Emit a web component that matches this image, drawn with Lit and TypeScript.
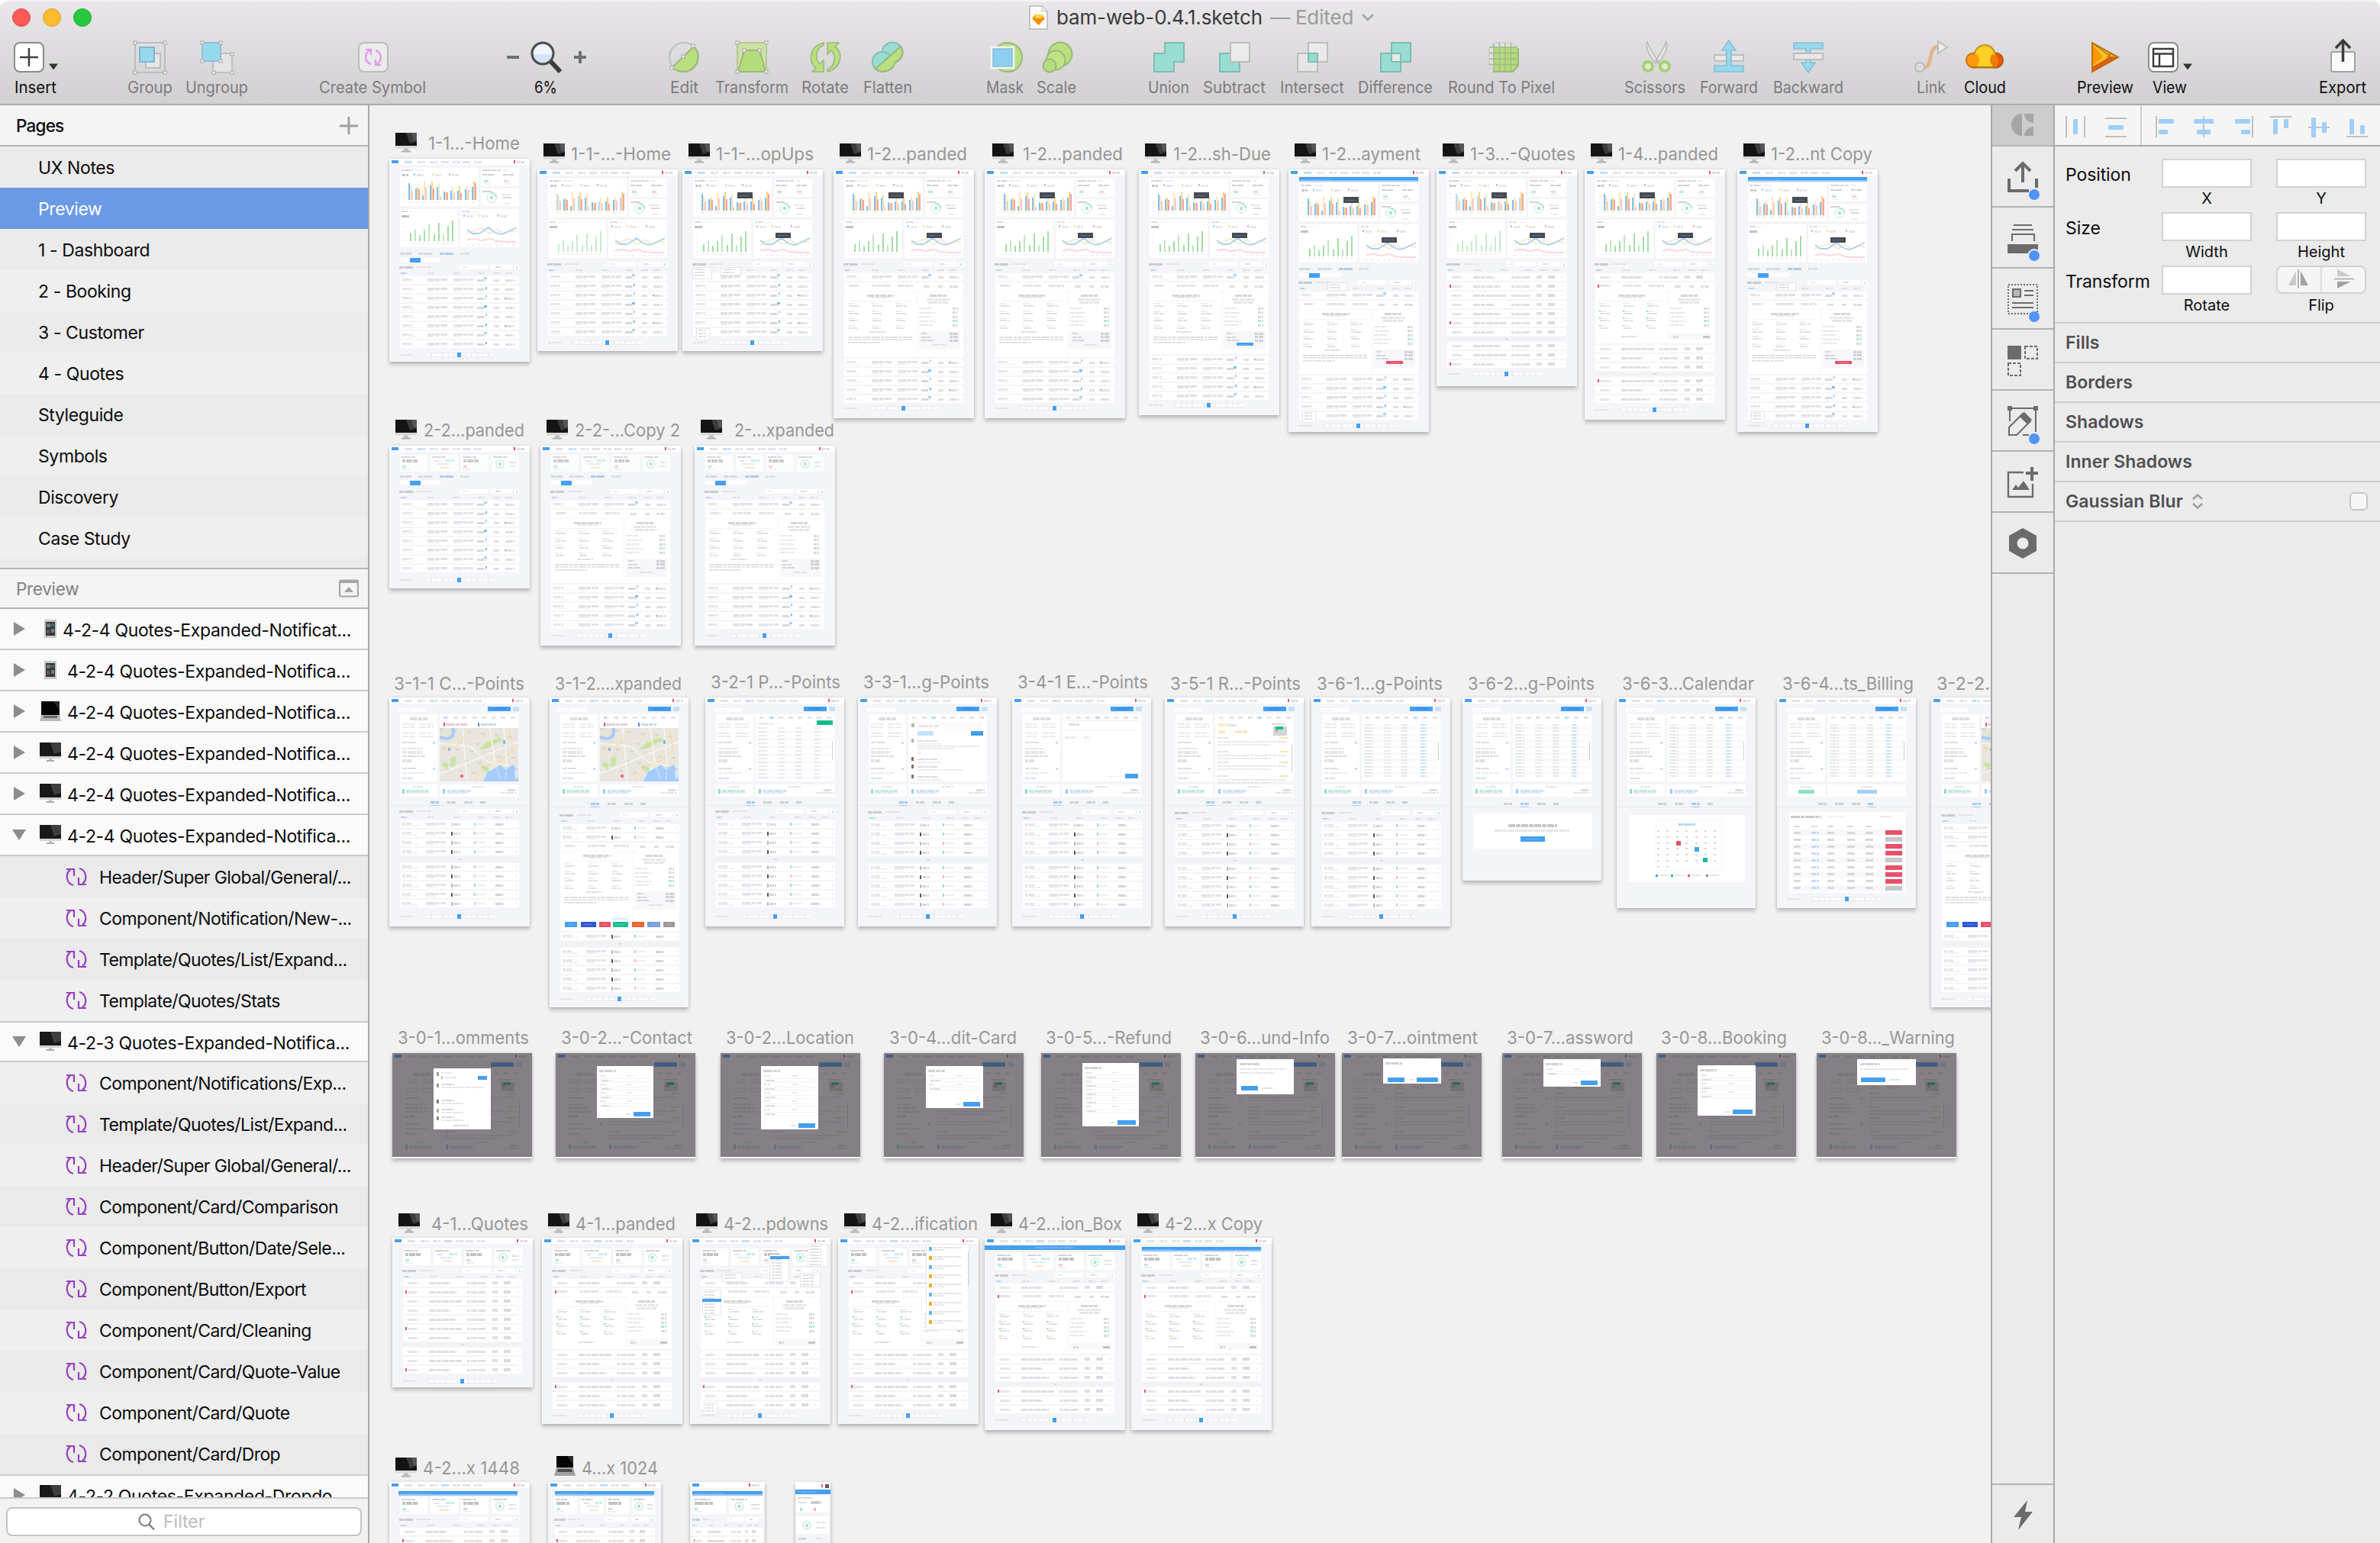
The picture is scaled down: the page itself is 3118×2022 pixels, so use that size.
import { LitElement, html, svg, css, nothing } from "lit";
import { customElement } from "lit/decorators.js";

const BLUE = "#459ff0";
const RED = "#e9506a";
const GREEN = "#18c191";

/* ---------- small drawing helpers ---------- */

const box = (x: number, y: number, w: number, h: number, fill: string) =>
  svg`<rect x=${x} y=${y} width=${w} height=${h} fill=${fill}></rect>`;

const dashes = ["9 1 6 1", "6 1 11 1 4 1", "12 1 5 1", "4 1 8 1 10 1"];

const words = (x: number, y: number, w: number, color = "#dfe1e6", h = 3) =>
  svg`<line x1=${x} y1=${y} x2=${x + w} y2=${y} stroke=${color} stroke-opacity="0.72" stroke-width=${h} stroke-dasharray=${dashes[Math.round(x * 3 + w) % 4]}></line>`;

const seq = (n: number) => Array.from({ length: n }, (_, i) => i);

/* ---------- artboard parts ---------- */

const nav = (w: number, active = 0) => svg`
  ${box(0, 0, w, 8, "#ffffff")}
  ${box(3, 2, 9, 4, BLUE)}
  ${w > 120
    ? [20, 37, 53, 68, 83, 96, 111].filter((x) => x < w - 45).map((x, i) => words(x, 4, 10, i === active ? "#b0d0f2" : "#d6d8de", 3))
    : nothing}
  ${box(w - 21, 2, 2, 4, RED)}
  ${words(w - 17, 4, 10, "#ced0d6", 3)}`;

const pager = (y: number) => svg`
  ${words(14, y + 3, 17, "#dcdde1", 2)}
  ${box(47, y, 90, 6, "#eaebee")}
  ${seq(12).map((i) => box(48 + i * 7.5, y + 1, 6, 4, "#fdfdfd"))}
  ${box(89, y, 5, 6, BLUE)}`;

const pill = (x: number, y: number, w: number, h: number, fill: string) => svg`
  ${box(x, y, w, h, fill)}${words(x + w * 0.25, y + h / 2, w * 0.5, "#ffffff55", 1)}`;

const listHead = (y: number) => svg`
  ${words(13, y, 18, "#b9bbc0", 3)}${words(36, y, 18, "#dcdde1", 2)}
  ${box(92, y - 3, 37, 6, "#ffffff")}${words(96, y, 6, "#e6e6ea", 2)}
  ${box(133, y - 3, 28, 6, "#ffffff")}${words(139, y, 8, "#d0d0d4", 2)}
  ${box(164, y - 3, 6, 6, "#ffffff")}${box(166, y - 1, 2, 3, "#c4e2fa")}
  ${words(15, y + 8, 8, "#9cc8f3", 2)}
  ${[50, 84, 116, 136, 152].map((x) => words(x, y + 8, 9, "#d4d5da", 2))}`;

type Kind = "book" | "quote" | "point";

const listRow = (y: number, i: number, kind: Kind) => svg`
  ${box(14, y, 156, 10, "#ffffff")}
  ${kind === "book"
    ? svg`
      ${words(17, y + 4, 13, "#dcdde2", 3)}${words(17, y + 7, 22, "#edeef1", 1)}
      ${words(50, y + 4, 26, "#d4d5da", 3)}${words(50, y + 7, 14, "#ebecef", 2)}
      ${words(84, y + 4, 26, "#d7d8dd", 3)}${words(84, y + 7, 12, "#eeeff2", 2)}
      ${words(115, y + 5, 11, "#c8cacf", 3)}
      ${box(126 - (i % 3 ? 0 : 2), y + 1 + (i % 2), i % 3 ? 2 : 4, 3, i % 2 ? "#7fbdf5" : "#a9d3f8")}
      ${words(137, y + 5, 7, "#d3d4d9", 3)}${words(152, y + 5, 12, "#d3d4d9", 3)}
      ${i % 3 === 2 ? box(151, y + 4, 2, 2, "#f0909f") : nothing}`
    : kind === "quote"
      ? svg`
      ${i % 4 === 1 ? box(17, y + 3, 2, 4, RED) : nothing}
      ${words(20, y + 5, 14, "#dcdde2", 3)}
      ${words(48, y + 5, 28 + (i % 3) * 8, "#d2d3d8", 3)}
      ${words(98, y + 5, 25, "#d4d5da", 3)}
      ${words(131, y + 5, 7, "#d3d4d9", 4)}${words(146, y + 5, 10, "#cccdd3", 4)}
      ${box(164, y + 4, 1, 2, "#dddddd")}`
      : svg`
      ${words(17, y + 4, 12, "#dcdde2", 3)}${words(17, y + 7, 20, "#ebecf0", 2)}
      ${words(48, y + 4, 26, "#d9dadf", 3)}${words(48, y + 7, 14, "#e9eaee", 2)}
      ${box(81, y + 3, 2, 5, i === 0 ? "#dcdce0" : i % 2 ? "#555555" : "#b8b8b8")}${words(84, y + 5, 9, "#c6c7cb", 3)}
      ${box(111, y + 3, 2, 4, ["#8fdfc6", "#a6cff8", "#f6bcc6"][i % 3])}${words(114, y + 5, 12, "#e6e7ea", 2)}
      ${words(139, y + 5, 11, "#c4c5ca", 3)}${box(166, y + 4, 1, 2, "#dddddd")}`}`;

type Detail = "plain" | "blue" | "red" | "dots" | "social";

const expanded = (y: number, h: number, kind: Detail) => {
  const dots = ["#e3e4e8", "#8fe0c6", "#8fe0c6", "#f5cd82"];
  return svg`
  ${box(14, y, 156, h, "#ffffff")}
  ${kind === "dots" ? box(17, y + 3, 2, 4, RED) : nothing}
  ${words(20, y + 4, 14, "#d8d9de", 3)}${words(50, y + 4, 25, "#d8d9de", 3)}${words(84, y + 4, 20, "#d8d9de", 3)}
  ${words(118, y + 5, 8, "#d3d4d9", 3)}${words(137, y + 5, 6, "#d3d4d9", 3)}${words(152, y + 5, 11, "#cfd0d5", 3)}
  ${box(14, y + 11, 156, 1, "#f7f7fa")}${box(109, y + 12, 1, h - 14, "#f4f4f7")}
  ${words(44, y + 17, 36, "#c5c6cb", 3)}${words(50, y + 20, 24, "#e1e2e6", 2)}
  ${words(126, y + 17, 22, "#c5c6cb", 3)}${words(122, y + 22, 30, "#dcdde1", 3)}${words(124, y + 26, 26, "#dcdde1", 3)}
  ${box(22, y + 24, 80, 1, "#f3f3f6")}
  ${seq(4).map((r) =>
    seq(3).map((c) => svg`
      ${box(19 + c * 31, y + 27 + r * 9.5, 2, 2, kind === "dots" ? dots[r] : "#ececef")}
      ${words(21 + c * 31, y + 28 + r * 9.5, 7, "#e8e9ec", 2)}
      ${words(20 + c * 31, y + 31 + r * 9.5, 14 - r, "#d3d4d9", 2)}`)
  )}
  ${seq(5).map((r) => svg`
    ${words(112, y + 34 + r * 5.5, 16 + ((r * 5) % 9), "#dfe0e4", 2)}
    ${words(156, y + 34 + r * 5.5, 7, r === 3 ? "#8fe0c6" : "#c9cacf", 3)}`)}
  ${words(48, y + (kind === "dots" ? h - 9 : 65), 21, "#d3d4d8", 2)}
  ${kind === "dots"
    ? svg`${box(112, y + h - 14, 54, 9, "#f8f8fa")}${words(116, y + h - 9, 7, "#c9cacf", 3)}${words(155, y + h - 9, 9, "#aeb0b6", 3)}`
    : svg`
      ${words(19, y + 72, 84, "#d2d3d7", 2)}${words(19, y + 75, 84, "#dadbdf", 2)}${words(19, y + 79, 42, "#d6d7db", 2)}
      ${box(112, y + 64, 54, 24, "#f7f7f9")}
      ${seq(3).map((r) => svg`${words(115, y + 67 + r * 4.5, 8 + r * 4, "#c6c7cc", 2)}${words(152, y + 67 + r * 4.5, 11, "#c0c1c6", 3)}`)}
      ${kind === "blue" || kind === "red" ? pill(128, y + 79, 22, 4, kind === "blue" ? BLUE : RED) : words(130, y + 82, 18, "#d8d9dd", 2)}`}
  ${kind === "social"
    ? svg`
      ${box(82, y + h - 18, 20, 4, "#e4f1fd")}
      ${[
        [20, 16, BLUE],
        [41, 20, "#3158da"],
        [65, 15, RED],
        [83, 20, GREEN],
        [108, 16, "#ef632c"],
        [128, 17, "#7d9de0"],
        [149, 15, "#999999"],
      ].map(([x, w, c]) => pill(x as number, y + h - 12, w as number, 7, c as string))}`
    : nothing}`;
};

/* steps: "r<n>" is n rows, "d<n>" a divider n high, "e<n>" an expanded row n high */
const list = (y0: number, steps: string, kind: Kind, detail: Detail = "plain") => {
  let y = y0;
  let n = 0;
  const out: unknown[] = [];
  for (const s of steps.split(" ")) {
    if (s[0] === "r") {
      for (const _ of seq(Number(s.slice(1)))) {
        out.push(listRow(y, n++, kind));
        y += 12;
      }
    } else {
      const h = Number(s.slice(1));
      if (s[0] === "d") out.push(svg`${box(14, y, 156, h - 2, "#f1f2f4")}${words(90, y + h / 2 - 1, 5, "#cccdd1", 2)}`);
      else {
        out.push(expanded(y, h - 2, detail));
        n++;
      }
      y += h;
    }
  }
  return out;
};

const charts = (y: number, tips: boolean, pale = false) => {
  const h1 = [22, 15, 6, 19, 17, 11, 12, 12, 14, 17];
  const h2 = [19, 17, 25, 24, 22, 10, 17, 18, 18, 25];
  const h3 = [12, 14, 16, 15, 5, 10, 9, 9, 13, 22];
  const g = [10, 15, 8, 14, 22, 9, 24, 9, 20, 27];
  return svg`
  ${box(14, y, 103, 50, "#ffffff")}${box(120, y, 50, 24, "#ffffff")}${box(120, y + 27, 50, 23, "#ffffff")}
  ${box(14, y + 54, 76, 50, "#ffffff")}${box(93, y + 54, 77, 50, "#ffffff")}
  ${words(16, y + 3, 15, "#c0c1c5", 2)}${words(34, y + 3, 11, "#e5e6e9", 2)}
  ${words(17, y + 9, 8, "#b0b2b7", 3)}
  ${[["#a4cff8", 32], ["#fbdda0", 56], ["#f6adb6", 78]].map(([c, x]) => svg`${box(x as number, y + 7, 2, 3, c as string)}${words((x as number) + 4, y + 9, 9, "#dadbdf", 3)}`)}
  ${seq(5).map((i) => words(17, y + 19 + i * 6, 3, "#e8e8ec", 1))}
  ${seq(10).map((i) => svg`
    ${box(25 + i * 9.2, y + 42 - h1[i], 2, h1[i], i % 3 === 0 && pale ? "#b3dafb" : "#7ec1f8")}
    ${box(27 + i * 9.2, y + 42 - h2[i], 2, h2[i], i % 2 ? "#fbd48a" : "#fbe7bc")}
    ${box(29 + i * 9.2, y + 42 - h3[i], 2, h3[i], i % 2 ? "#f4a3a5" : "#f8c9c9")}
    ${words(25 + i * 9.2, y + 45, 4, "#ececef", 2)}`)}
  ${words(122, y + 3, 24, "#c5c6ca", 2)}${words(149, y + 3, 6, "#e5e6e9", 2)}
  ${words(122, y + 9, 15, "#bcbec2", 2)}${words(149, y + 9, 14, "#bcbec2", 2)}
  ${words(124, y + 17, 6, "#a2e2cd", 3)}${words(150, y + 17, 6, "#f8c1ca", 3)}${words(124, y + 21, 9, "#ececef", 2)}${words(150, y + 21, 9, "#ececef", 2)}
  ${words(122, y + 31, 12, "#c0c1c5", 2)}
  <circle cx="134" cy=${y + 39} r="6" fill="none" stroke="#dff4ed" stroke-width="2"></circle>
  <path d="M134 ${y + 33}A6 6 0 0 1 140 ${y + 39}" fill="none" stroke="#a9e4d2" stroke-width="2"></path>
  <circle cx="134" cy=${y + 39} r="2.5" fill="#a9e6d3"></circle>
  ${words(147, y + 35, 12, "#d8d9dc", 2)}${words(149, y + 39, 11, "#cacbcf", 2)}${words(150, y + 47, 8, "#e3e4e7", 2)}
  ${words(16, y + 57, 8, "#c9cace", 2)}${words(27, y + 57, 10, "#e5e6e9", 1)}${words(16, y + 63, 10, "#a9aaaf", 3)}
  ${g.map((v, i) => svg`${box(27 + i * 6.1, y + 96 - v, 2, v, pale ? "#c9ebca" : i % 3 === 1 ? "#bfe6c0" : "#a3dda5")}${words(26 + i * 6.1, y + 99, 3, "#ececef", 2)}`)}
  ${seq(5).map((i) => words(17, y + 71 + i * 6, 3, "#ececef", 1))}
  ${words(95, y + 57, 10, "#cfd0d4", 2)}${words(108, y + 57, 10, "#e5e6e9", 1)}
  ${[["#a4cff8", 97], ["#fbdda0", 117], ["#f6adb6", 142]].map(([c, x]) => svg`${box(x as number, y + 61, 2, 3, c as string)}${words((x as number) + 4, y + 63, 8, "#dadbdf", 3)}`)}
  <g fill="none" stroke-width="1.8" shape-rendering="auto">
    <polyline points="102,${y + 86} 112,${y + 82} 120,${y + 79} 132,${y + 86} 141,${y + 80} 150,${y + 87} 158,${y + 82} 167,${y + 84}" stroke="#fbe8ca"></polyline>
    <polyline points="102,${y + 81} 109,${y + 86} 118,${y + 86} 124,${y + 82} 130,${y + 78} 137,${y + 84} 146,${y + 87} 155,${y + 84} 167,${y + 78}" stroke="#abd0f3"></polyline>
    <polyline points="102,${y + 94} 112,${y + 93} 121,${y + 95} 133,${y + 93} 140,${y + 96} 152,${y + 97} 167,${y + 97}" stroke="#fbd8dd"></polyline>
  </g>
  ${seq(9).map((i) => words(101 + i * 7.5, y + 101, 3, "#ececef", 2))}
  ${tips ? svg`${box(72, y + 18, 20, 8, "#454c55")}${words(75, y + 22, 13, "#747b84", 1)}${box(122, y + 71, 20, 7, "#454c55")}${words(125, y + 74, 13, "#747b84", 1)}` : nothing}`;
};

const tabs = (y: number) => svg`
  ${words(14, y, 15, "#ccCDd1", 3)}${words(38, y, 19, "#cfd0d4", 3)}${words(66, y, 19, "#94bbe4", 3)}${words(93, y, 12, "#d4d5d9", 3)}
  ${box(14, y + 6, 53, 5, "#ffffff")}${box(27, y + 6, 14, 6, BLUE)}`;

const banner = (y: number, x: number, w: number) => svg`
  ${box(x, y, w, 4, BLUE)}${box(x, y + 4, w, 2, "#93c7f7")}${words(x + 3, y + 3, 40, "#7fbdf5", 1)}`;

const stats = (y: number, w: number) => {
  const n = w > 140 ? 4 : 2;
  const m = w > 170 ? 14 : w > 120 ? 8 : 3;
  const cw = (w - 2 * m - (n - 1) * 4) / n;
  return seq(n).map((i) => {
    const x = m + i * (cw + 4);
    return svg`
    ${box(x, y, cw, 22, "#ffffff")}${words(x + 2, y + 3, cw * 0.5, "#c0c1c5", 2)}
    ${i % 4 === 3 || (n === 2 && i === 1)
      ? svg`<circle cx=${x + cw * 0.3} cy=${y + 12} r="5" fill="none" stroke="#d3f1e8" stroke-width="2"></circle>
        <circle cx=${x + cw * 0.3} cy=${y + 12} r="2" fill="#a4e3cf"></circle>
        ${words(x + cw * 0.65, y + 10, cw * 0.25, "#d0d1d4", 2)}${words(x + cw * 0.65, y + 15, cw * 0.25, "#dadbde", 2)}`
      : i === 1
        ? svg`${words(x + 5, y + 8, 8, "#d6d7db", 2)}${words(x + 20, y + 7, cw * 0.3, "#b1e6d5", 3)}${words(x + 8, y + 12, 18, "#cfe2f6", 2)}${words(x + 12, y + 17, 12, "#f6dcb3", 2)}`
        : svg`${words(x + 3, y + 8, cw * 0.55, "#a9abb0", 4)}${words(x + 3, y + 15, 5, i ? "#f4b6c0" : "#9fe1cb", 3)}${words(x + 3, y + 19, 10, "#e3e4e7", 2)}`}`;
  });
};

const mapPicture = () => svg`
  <g transform="translate(66 40)" shape-rendering="auto">
    <rect width="103" height="70" fill="#eae6df"></rect>
    <path d="M0 2L18 0L22 12L14 24L0 20Z" fill="#e6e2d8"></path>
    <g fill="#dcd8d0">${seq(26).map((i) => svg`<rect x=${(i * 29) % 98} y=${(i * 17) % 66} width="5" height="3"></rect>`)}</g>
    <path d="M17 0C20 8 16 14 8 14L0 12" fill="none" stroke="#a9cbfb" stroke-width="4"></path>
    <path d="M52 27L62 19L78 12L84 16L74 20L64 26L54 28ZM16 37L22 38L20 50L13 50ZM4 44L12 47L10 53L3 50ZM56 48L66 53L60 58L54 52Z" fill="#c6e5a0"></path>
    <path d="M0 20L40 24L62 44L103 52M30 0L36 70M66 0L72 44L58 70M0 60L50 40L103 18M84 0L88 50" fill="none" stroke="#f8f5f0" stroke-width="1.6"></path>
    <path d="M0 33L24 22L40 0M44 70L60 50L80 42M91 0L96 30L76 46" fill="none" stroke="#f7dca5" stroke-width="1.2"></path>
    <path d="M57 70L63 57L74 52L80 48L86 54L96 48L103 56V70Z" fill="#a4ccff"></path>
    <path d="M98 56L103 50V64L99 68Z" fill="#dfe5ea"></path>
    <path d="M74 53L80 66M88 52L86 68" stroke="#eae6df" stroke-width="1"></path>
    <rect x="27" y="61" width="4" height="4" fill="#e37886"></rect>
    <rect x="83" y="16" width="3" height="5" fill="#8fb5de"></rect>
    <rect x="11" y="26" width="3" height="4" fill="#8fb5de"></rect>
  </g>`;

const customerTop = (panel: string, tab = 0, button = false) => svg`
  ${nav(182, 2)}
  ${box(12, 14, 37, 5, "#ffffff")}${words(15, 17, 14, "#e4e5e8", 1)}
  ${box(129, 12, 30, 6, BLUE)}${words(137, 15, 16, "#2f8ae0", 2)}${box(162, 12, 8, 6, "#c5e1fa")}
  ${box(14, 22, 49, 88, "#ffffff")}${box(66, 22, 103, 88, "#ffffff")}
  ${words(27, 28, 23, "#cfd0d4", 4)}
  ${[35, 39, 47, 51].map((y) => svg`${words(17, y, 17, "#e2e3e6", 2)}${words(39, y, 19, "#e2e3e6", 2)}`)}
  ${words(17, 59, 18, "#d0d1d5", 2)}${box(57, 58, 3, 3, "#c4e0fa")}
  ${[67, 71, 73].map((y) => words(17, y, 26, "#dcdde0", 2))}${words(17, 77, 30, "#cfd0d4", 2)}${words(17, 83, 12, "#d3d4d7", 4)}
  ${words(17, 93, 18, "#d0d1d5", 2)}${box(57, 92, 3, 3, "#c4e0fa")}${words(17, 99, 30, "#e3e4e7", 2)}${words(17, 106, 14, "#b5d7f8", 2)}
  ${seq(8).map((i) => words(71 + i * 12.5, 26, 6, i === tab ? "#9fccf8" : "#d9dade", 3))}
  ${panel === "map"
    ? svg`${box(71, 33, 2, 5, "#e55f74")}${words(74, 35, 28, "#dfb9be", 3)}${box(116, 33, 2, 5, "#4f94e3")}${words(120, 35, 20, "#b9cbdf", 3)}${mapPicture()}`
    : nothing}
  ${panel === "green"
    ? svg`${words(70, 34, 20, "#e4e5e8", 3)}${box(146, 30, 21, 6, GREEN)}${words(150, 33, 13, "#0fa87c", 2)}`
    : nothing}
  ${panel === "green" || panel === "table"
    ? seq(panel === "green" ? 14 : 17).map((r) => {
        const y = panel === "green" ? 40 + r * 5 : 36 + r * 4.2;
        return svg`${r % 2 ? box(68, y - 2, 98, 4, "#fafafc") : nothing}
        ${box(70, y - 1, 1, 2, ["#8fe0c6", "#b0d2f3", "#f6d9a0"][r % 3])}
        ${words(72, y, 9, "#dddee2", 2)}${words(95, y, 9, "#e2e3e6", 2)}${words(118, y, 8, "#dddee2", 2)}${words(143, y, 8, panel === "table" ? "#b3d6f7" : "#dddee2", 2)}`;
      })
    : nothing}
  ${panel === "green" || panel === "table" ? box(166, 58, 1, 24, "#d0d1d4") : nothing}
  ${panel === "comments"
    ? svg`
      ${box(70, 34, 4, 5, "#b8b4a6")}${box(77, 32, 86, 9, "#fafafb")}${words(80, 37, 26, "#e1e2e4", 3)}
      ${box(78, 44, 21, 6, "#c5e1fa")}${box(148, 44, 16, 6, BLUE)}
      ${[57, 81, 91, 104].map((y, i) => svg`${box(70, y - 3, 3, 5, i === 0 ? "#b8b4a6" : "#8f6c62")}${words(78, y, 26, "#cfd0d3", 2)}${words(78, y + 4, i === 2 ? 62 : 32, "#e5e6e8", 2)}`)}
      ${words(78, 64, 82, "#dfe0e3", 2)}${words(78, 67, 48, "#e3e4e6", 2)}${words(78, 72, 5, "#e3e4e6", 3)}`
    : nothing}
  ${panel === "editor"
    ? svg`${box(68, 30, 98, 1, "#eef0f4")}${words(74, 35, 14, "#cfd0d3", 3)}${box(68, 42, 98, 1, "#f0f1f4")}${words(69, 52, 14, "#e0e1e4", 3)}${words(95, 52, 6, "#e0e1e4", 3)}
      ${words(124, 103, 20, "#e7e8ea", 1)}${box(148, 100, 17, 6, BLUE)}`
    : nothing}
  ${panel === "ratings"
    ? svg`${words(70, 36, 14, "#fae2ac", 4)}${words(84, 36, 10, "#dadbde", 3)}${words(70, 45, 10, "#fae2ac", 4)}${words(92, 45, 16, "#f1dfba", 4)}
      ${words(140, 35, 18, "#c8c9cc", 2)}${box(142, 38, 18, 12, "#d2d5d6")}${box(145, 38, 10, 4, GREEN)}${box(145, 42, 3, 3, "#e88e9a")}
      ${[53, 71, 85, 103].map((y) => svg`${words(69, y, 14, "#d8d9dc", 2)}${words(150, y, 12, "#f8dc97", 2)}${words(69, y + 5, 90, "#dfe0e3", 2)}${words(69, y + 9, 70, "#e3e4e6", 2)}`)}
      ${box(166, 62, 1, 36, "#d0d1d4")}`
    : nothing}
  ${box(14, 114, 49, 16, "#ffffff")}${box(66, 114, 103, 16, "#ffffff")}
  ${words(31, 117, 14, "#dcdde0", 2)}${words(109, 117, 16, "#dcdde0", 2)}
  ${button
    ? svg`${box(28, 121, 21, 5, "#8ce0c5")}${box(105, 121, 26, 5, "#a4cff8")}`
    : svg`${box(17, 120, 3, 6, "#8fdfc6")}${words(22, 122, 31, "#a6e4d1", 3)}${words(22, 125, 30, "#dcdde0", 2)}
      ${box(70, 120, 3, 6, "#9dcaf7")}${words(76, 122, 31, "#b1d5f9", 3)}${words(76, 125, 28, "#dcdde0", 2)}
      ${words(155, 121, 11, "#cfd0d3", 3)}${words(145, 125, 22, "#d8d9dc", 2)}`}`;

const customerTabs = (y: number, active = 0) => svg`
  ${[54, 76, 98, 119].map((x, i) => words(x, y, i === 3 ? 7 : 11, i === active ? "#85bdf3" : "#bfc0c4", 3))}
  ${box(0, y + 4, 182, 1, "#ebecf0")}${box([54, 76, 98, 119][active], y + 4, 11, 1, "#9ccaf7")}`;

const modal = (x: number, y: number, w: number, h: number, buttonW = 18) => svg`
  ${box(x, y, w, h, "#ffffff")}
  ${words(x + 3, y + 6, 22, "#bfc0c3", 3)}
  ${seq(Math.max(0, Math.floor((h - 24) / 11))).map((i) => svg`
    ${words(x + 4, y + 13 + i * 11, 8, "#dadbdd", 2)}${words(x + w / 2 + 2, y + 13 + i * 11, 8, "#e2e3e5", 2)}
    <rect x=${x + 4.5} y=${y + 16.5 + i * 11} width=${w - 10} height="4" fill="none" stroke="#f3f3f5"></rect>${words(x + 6, y + 18.5 + i * 11, 12, "#cfd0d3", 2)}`)}
  ${box(x + w - 4 - buttonW, y + h - 8, buttonW, 6, BLUE)}
  ${words(x + w - 14 - buttonW, y + h - 5, 6, "#d9dadd", 2)}`;

const drop = (x: number, y: number, w: number, h: number) => svg`
  <rect x=${x + 0.5} y=${y + 0.5} width=${w - 1} height=${h - 1} fill="#ffffff" stroke="#e1e6ec"></rect>
  ${seq(Math.floor((h - 2) / 4)).map((i) => words(x + 3, y + 3 + i * 4, w * 0.55, "#d5d7da", 2))}`;

const notifications = () => svg`
  <rect x="115.500" y="8.500" width="56" height="112" fill="#ffffff" stroke="#e1e6ec"></rect>
  ${seq(9).map((i) => svg`${box(119, 12 + i * 12, 4, 5, i % 3 === 0 && i !== 3 || i === 2 || i === 5 || i === 7 ? (i === 6 ? "#f3a92f" : "#6fb1ee") : "#f3a92f")}${words(125, 13 + i * 12, 36, "#d9dadd", 2)}${words(125, 16 + i * 12, 14, "#dcdde0", 2)}`)}
  ${box(170, 18, 1, 46, "#d4d6d9")}`;

/* ---------- artboards ---------- */

interface Board {
  x: number;
  y: number;
  w: number;
  h: number;
  label?: string;
  lx?: number;
  lw?: number;
  base?: number;
  ix?: number;
  laptop?: boolean;
  art: () => unknown;
}

const dash = (steps: string, pagerY: number, opt: { kind?: Kind; detail?: Detail; tips?: boolean; bar?: boolean; tabs?: boolean; pale?: boolean } = {}) => {
  const s = opt.bar ? 6 : 0;
  const t = s + (opt.tabs ? 18 : 0);
  return svg`${nav(184)}${opt.bar ? banner(10, 14, 156) : nothing}${charts(12 + s, opt.tips ?? true, opt.pale)}
  ${opt.tabs ? tabs(124 + s) : nothing}${listHead(124 + t)}${list(136 + t, steps, opt.kind ?? "book", opt.detail)}${pager(pagerY)}`;
};

const booking = (steps: string, pagerY: number) => svg`
  ${nav(184, 1)}<g opacity="0.8">${stats(12, 184)}</g>${tabs(40)}${listHead(60)}${list(72, steps, "book")}${pager(pagerY)}`;

const quotes = (steps: string, pagerY: number, s = 0) => svg`
  ${nav(184, 3)}${stats(14 + s, 184)}${listHead(43 + s)}${list(54 + s, steps, "quote", "dots")}${pager(pagerY)}`;

const points = (panel: string, tab: number, y = 149) => svg`
  ${customerTop(panel, tab)}${customerTabs(137)}${listHead(y)}${list(y + 12, "r4 d8 r5", "point")}${pager(284)}`;

const social = () => svg`
  ${customerTop("map")}${customerTabs(139)}${listHead(154)}
  ${list(166, "r2 e118 r1 d8 r5", "point", "social")}${pager(392)}`;

const dimmed = (m: unknown) => svg`
  ${box(0, 0, 183, 138, "#fbfbfb")}
  ${customerTop("ratings", 4)}
  ${box(0, 0, 183, 136, "rgba(66,60,68,0.65)")}
  ${m}`;

const boards: Board[] = [
  { x: 510, y: 208, w: 184, h: 266, label: "1-1...-Home", lx: 561, lw: 120, ix: 518, art: () => dash("r8", 254, { tips: false, tabs: true }) },
  { x: 704, y: 222, w: 184, h: 238, label: "1-1-...-Home", lx: 748, lw: 131, ix: 712, art: () => dash("r7", 224, { tips: false, pale: true }) },
  {
    x: 894, y: 222, w: 184, h: 238, label: "1-1-...opUps", lx: 938, lw: 128, ix: 902,
    art: () => svg`${dash("r7", 224)}${drop(13, 128, 26, 16)}${drop(50, 128, 27, 11)}${drop(18, 208, 18, 16)}`,
  },
  { x: 1092, y: 222, w: 184, h: 326, label: "1-2...panded", lx: 1136, lw: 131, ix: 1100, art: () => dash("r1 e100 r5", 310) },
  { x: 1290, y: 222, w: 184, h: 326, label: "1-2...panded", lx: 1340, lw: 131, ix: 1300, art: () => dash("r1 e100 r5", 310) },
  { x: 1492, y: 222, w: 184, h: 322, label: "1-2...sh-Due", lx: 1537, lw: 128, ix: 1500, art: () => dash("r1 e96 r5", 306, { detail: "blue" }) },
  {
    x: 1688, y: 222, w: 184, h: 344, label: "1-2...ayment", lx: 1732, lw: 129, ix: 1696,
    art: () => svg`${dash("r1 e98 r5", 333, { detail: "red", bar: true, tabs: true })}${drop(51, 148, 26, 11)}${drop(18, 316, 18, 16)}`,
  },
  { x: 1882, y: 222, w: 184, h: 284, label: "1-3...-Quotes", lx: 1926, lw: 138, ix: 1890, art: () => dash("r7 d6 r3", 265, { kind: "quote", pale: true }) },
  { x: 2076, y: 222, w: 184, h: 328, label: "1-4...panded", lx: 2120, lw: 131, ix: 2084, art: () => dash("r1 e82 r3 d6 r3", 312, { kind: "quote", detail: "dots" }) },
  {
    x: 2276, y: 222, w: 184, h: 344, label: "1-2...nt Copy", lx: 2320, lw: 133, ix: 2284,
    art: () => svg`${dash("r1 e98 r5", 333, { detail: "red", bar: true, tabs: true })}${drop(51, 148, 26, 11)}${drop(18, 316, 18, 16)}`,
  },

  { x: 510, y: 584, w: 184, h: 187, label: "2-2...panded", lx: 555, lw: 132, ix: 518, art: () => booking("r8", 173) },
  { x: 708, y: 584, w: 184, h: 262, label: "2-2-...Copy 2", lx: 753, lw: 138, ix: 716, art: () => booking("r1 e98 r5", 246) },
  { x: 910, y: 584, w: 184, h: 262, label: "2-...xpanded", lx: 962, lw: 131, ix: 918, art: () => booking("r1 e98 r5", 246) },

  { x: 510, y: 914, w: 184, h: 300, label: "3-1-1 C...-Points", lx: 516, lw: 171, base: 904, art: () => points("map", 0) },
  { x: 720, y: 914, w: 182, h: 406, label: "3-1-2....xpanded", lx: 727, lw: 166, base: 904, art: social },
  { x: 924, y: 914, w: 182, h: 300, label: "3-2-1 P...-Points", lx: 931, lw: 170, base: 902, art: () => points("green", 1) },
  { x: 1124, y: 914, w: 182, h: 300, label: "3-3-1...g-Points", lx: 1131, lw: 165, base: 902, art: () => points("comments", 2, 150) },
  { x: 1326, y: 914, w: 182, h: 300, label: "3-4-1 E...-Points", lx: 1333, lw: 171, base: 902, art: () => points("editor", 3, 150) },
  { x: 1526, y: 914, w: 182, h: 300, label: "3-5-1 R...-Points", lx: 1533, lw: 171, base: 904, art: () => points("ratings", 4, 151) },
  { x: 1718, y: 914, w: 182, h: 300, label: "3-6-1...g-Points", lx: 1725, lw: 165, base: 904, art: () => points("table", 5, 151) },
  {
    x: 1916, y: 914, w: 182, h: 240, label: "3-6-2...g-Points", lx: 1923, lw: 166, base: 904,
    art: () => svg`${customerTop("table", 5)}${customerTabs(139, 1)}${box(14, 152, 156, 46, "#ffffff")}${words(60, 168, 64, "#b0b1b6", 4)}${words(42, 174, 98, "#dcdde0", 3)}${pill(76, 182, 32, 7, BLUE)}`,
  },
  {
    x: 2118, y: 914, w: 182, h: 276, label: "3-6-3...Calendar", lx: 2125, lw: 173, base: 904,
    art: () => svg`${customerTop("table", 5)}${customerTabs(139, 2)}${box(16, 154, 152, 88, "#ffffff")}
      <rect x="51" y="160" width="86" height="66" fill="none" stroke="#f6f6f9"></rect>
      ${words(81, 166, 22, "#94c6f5", 3)}
      ${seq(7).map((r) => seq(7).map((c) => (r === 6 && c > 1 ? nothing : words(53 + c * 12.4, 175 + r * 7.8, 3, "#c6c7cb", 2))))}
      ${box(78, 188, 6, 6, RED)}${box(102, 196, 6, 6, BLUE)}${box(113, 210, 6, 6, GREEN)}
      ${[[51, BLUE], [71, GREEN], [93, RED], [117, "#888888"]].map(([x, c]) => svg`${box(x as number, 232, 3, 3, c as string)}${words((x as number) + 5, 233, 12, "#d8d9dc", 2)}`)}`,
  },
  {
    x: 2328, y: 914, w: 182, h: 276, label: "3-6-4...ts_Billing", lx: 2335, lw: 172, base: 904,
    art: () => svg`${customerTop("table", 5, true)}${customerTabs(139, 3)}${box(16, 150, 152, 106, "#ffffff")}
      ${words(18, 156, 40, "#b4b5ba", 3)}${words(68, 156, 20, "#ebecee", 2)}${words(136, 156, 14, "#dadbde", 2)}
      ${[22, 45, 66, 92, 116].map((x) => words(x, 169, 8, "#cacbcf", 2))}
      ${seq(9).map((r) => svg`${r % 2 ? nothing : box(19, 173 + r * 9.1, 146, 8, "#f8f8fb")}
        ${[22, 45, 66, 92, 116].map((x, c) => words(x, 177 + r * 9.1, 10, c === 1 ? "#a9d0f6" : "#c9cace", 3))}
        ${box(142, 174 + r * 9.1, 22, 6, r === 1 || r === 4 || r === 8 ? "#c6c7c9" : RED)}`)}
      ${pager(261)}`,
  },
  { x: 2530, y: 914, w: 182, h: 406, label: "3-2-2...", lx: 2537, lw: 0, base: 904, art: social },

  {
    x: 514, y: 1380, w: 183, h: 138, label: "3-0-1...omments", lx: 521, lw: 172, base: 1368,
    art: () => dimmed(svg`${box(54, 20, 75, 80, "#ffffff")}${box(58, 25, 3, 5, "#9aa092")}${words(64, 26, 14, "#e0e1e3", 2)}${box(64, 30, 2, 4, "#8fc3f7")}${words(68, 32, 16, "#d9dadd", 2)}${box(112, 30, 12, 5, BLUE)}
      ${[41, 62, 74, 84].map((y, i) => svg`${box(58, y - 1, 3, 5, ["#9aa092", "#7f7770", "#b4ac9e", "#8f8a82"][i])}${words(65, y, 16, "#c2c3c5", 2)}${words(65, y + 4, i ? 28 : 56, "#dcdddf", 2)}`)}${words(80, 95, 20, "#c9cacc", 2)}`),
  },
  { x: 728, y: 1380, w: 183, h: 138, label: "3-0-2...-Contact", lx: 735, lw: 172, base: 1368, art: () => dimmed(modal(54, 17, 74, 68, 22)) },
  { x: 944, y: 1380, w: 183, h: 138, label: "3-0-2...Location", lx: 951, lw: 168, base: 1368, art: () => dimmed(modal(53, 17, 75, 83, 22)) },
  { x: 1158, y: 1380, w: 183, h: 138, label: "3-0-4...dit-Card", lx: 1165, lw: 167, base: 1368, art: () => dimmed(modal(55, 17, 75, 55, 22)) },
  { x: 1364, y: 1380, w: 183, h: 138, label: "3-0-5...-Refund", lx: 1370, lw: 165, base: 1368, art: () => dimmed(modal(54, 13, 74, 83, 24)) },
  { x: 1566, y: 1380, w: 183, h: 138, label: "3-0-6...und-Info", lx: 1572, lw: 170, base: 1368, art: () => dimmed(svg`${box(54, 8, 75, 46, "#ffffff")}${words(58, 14, 26, "#bfc0c3", 3)}${words(58, 21, 62, "#dcdddf", 2)}${words(58, 26, 44, "#dcdddf", 2)}${box(60, 43, 22, 6, BLUE)}${words(88, 46, 14, "#d5d6d8", 2)}`) },
  { x: 1758, y: 1380, w: 183, h: 138, label: "3-0-7...ointment", lx: 1765, lw: 171, base: 1368, art: () => dimmed(svg`${modal(54, 7, 76, 33, 28)}${box(60, 32, 22, 6, BLUE)}`) },
  { x: 1968, y: 1380, w: 183, h: 138, label: "3-0-7...assword", lx: 1974, lw: 166, base: 1368, art: () => dimmed(modal(54, 8, 75, 36, 22)) },
  { x: 2170, y: 1380, w: 183, h: 138, label: "3-0-8...Booking", lx: 2176, lw: 165, base: 1368, art: () => dimmed(modal(54, 16, 76, 66, 26)) },
  { x: 2380, y: 1380, w: 183, h: 138, label: "3-0-8..._Warning", lx: 2386, lw: 175, base: 1368, art: () => dimmed(svg`${box(53, 8, 77, 34, "#ffffff")}${words(57, 14, 26, "#bfc0c3", 3)}${words(57, 21, 64, "#dcdddf", 2)}${box(58, 32, 32, 6, BLUE)}${words(96, 35, 14, "#d5d6d8", 2)}`) },

  { x: 514, y: 1622, w: 184, h: 196, label: "4-1...Quotes", lx: 565, lw: 127, base: 1612, ix: 522, art: () => quotes("r7 d6 r3", 185) },
  { x: 710, y: 1622, w: 184, h: 244, label: "4-1...panded", lx: 754, lw: 131, base: 1612, ix: 718, art: () => quotes("r1 e82 r3 d6 r3", 230) },
  {
    x: 904, y: 1622, w: 184, h: 244, label: "4-2...pdowns", lx: 948, lw: 137, base: 1612, ix: 912,
    art: () => svg`${quotes("r1 e82 r3 d6 r3", 230)}${drop(104, 22, 26, 36)}${box(105, 24, 25, 4, BLUE)}${drop(154, 8, 27, 30)}${drop(144, 46, 27, 18)}${drop(42, 46, 27, 12)}${drop(16, 68, 25, 34)}${box(16, 80, 25, 4, BLUE)}${drop(18, 216, 18, 16)}`,
  },
  { x: 1098, y: 1622, w: 184, h: 244, label: "4-2...ification", lx: 1142, lw: 139, base: 1612, ix: 1106, art: () => svg`${quotes("r1 e82 r3 d6 r3", 230)}${notifications()}` },
  { x: 1290, y: 1622, w: 184, h: 252, label: "4-2...ion_Box", lx: 1334, lw: 136, base: 1612, ix: 1298, art: () => svg`${quotes("r1 e82 r3 d6 r3", 236, 6)}${box(0, 10, 184, 6, BLUE)}${words(66, 13, 52, "#7fbdf5", 2)}` },
  { x: 1482, y: 1622, w: 184, h: 252, label: "4-2...x Copy", lx: 1526, lw: 128, base: 1612, ix: 1490, art: () => svg`${quotes("r1 e82 r3 d6 r3", 236, 6)}${banner(12, 14, 156)}` },

  { x: 510, y: 1942, w: 184, h: 120, label: "4-2...x 1448", lx: 554, lw: 127, base: 1932, ix: 518, art: () => svg`${quotes("r1 r4", 200, 6)}${banner(12, 12, 156)}` },
  {
    x: 718, y: 1942, w: 148, h: 120, label: "4...x 1024", lx: 762, lw: 100, base: 1932, ix: 726, laptop: true,
    art: () => svg`${nav(148, 3)}${banner(12, 9, 130)}${stats(20, 148)}<g transform="translate(-3 0) scale(.84 1)">${listHead(49)}${list(60, "r4", "quote")}</g>`,
  },
  { x: 904, y: 1942, w: 98, h: 120, art: () => svg`${nav(98)}${banner(12, 3, 92)}${stats(20, 98)}<g transform="translate(-5 0) scale(.59 1)">${listHead(49)}${list(60, "r4", "quote")}</g>` },
  {
    x: 1042, y: 1942, w: 46, h: 120,
    art: () => svg`${box(0, 0, 46, 8, "#ffffff")}${box(34, 3, 2, 4, RED)}${box(39, 3, 5, 5, "#555a60")}${box(0, 10, 46, 6, BLUE)}${words(3, 13, 26, "#7fbdf5", 2)}
      ${box(1, 18, 43, 22, "#ffffff")}${words(3, 21, 20, "#c5c6c9", 2)}${words(4, 27, 10, "#d3d4d7", 2)}${words(20, 27, 14, "#b8b9be", 4)}${box(6, 34, 3, 4, "#a4e3cf")}${box(24, 34, 3, 4, "#f4b6c0")}
      ${box(1, 45, 43, 23, "#ffffff")}<circle cx="15" cy="57" r="5" fill="none" stroke="#d3f1e8" stroke-width="2"></circle><circle cx="15" cy="57" r="2" fill="#a4e3cf"></circle>${words(27, 53, 12, "#d9dadd", 2)}${words(27, 60, 12, "#d9dadd", 2)}
      ${words(4, 74, 10, "#c9cacd", 3)}${words(26, 74, 10, "#dedfe2", 2)}`,
  },
];

const screenIcon = () => html`
  <svg class="dev" width="28" height="26" viewBox="0 0 28 26">
    <rect x="0" y="0" width="28" height="17" fill="#141414"></rect>
    <path d="M14 0H28V11L19 14Z" fill="#3c3c3c"></path><path d="M21 0H28V9L24 11Z" fill="#565656"></path>
    <rect x="0" y="17" width="28" height="3.500" fill="#d8d8da"></rect>
    <rect x="11" y="20.500" width="6" height="3" fill="#bcbcbe"></rect><rect x="8" y="23.500" width="12" height="2" fill="#aeaeb0"></rect>
  </svg>`;

const laptopIcon = () => html`
  <svg class="dev" width="28" height="27" viewBox="0 0 28 27">
    <rect x="3" y="0" width="22" height="15" fill="#050505"></rect><path d="M17 0H25V11Z" fill="#2c2c2c"></path>
    <path d="M3 15H25L28 26H0Z" fill="#a2a2a4"></path><path d="M5 17H23L24 21H4Z" fill="#4e4e50"></path>
  </svg>`;

@customElement("art-canvas")
class ArtCanvas extends LitElement {
  static styles = css`
    :host { display: block; position: relative; overflow: hidden; background: #f1f1f1; }
    .board { position: absolute; background: #f4f5f8; overflow: hidden; box-shadow: 0 4px 5px rgba(0, 0, 0, 0.2), 0 0 4px rgba(0, 0, 0, 0.12); }
    .board svg { display: block; }
    .label { position: absolute; overflow: visible; }
    .label text { font: 23.5px Inter, "Liberation Sans", sans-serif; fill: #979797; }
    .mark { position: absolute; }
  `;
  render() {
    return boards.map((b) => {
      const left = b.x - 484;
      const top = b.y - 138;
      const base = (b.base ?? b.y - 12) - 138;
      return html`
        ${b.ix ? html`<div class="mark" style="left:${b.ix - 484}px;top:${base - (b.laptop ? 24 : 22)}px">${b.laptop ? laptopIcon() : screenIcon()}</div>` : nothing}
        ${b.label
          ? html`<svg class="label" width="200" height="30" style="left:${b.lx! - 484}px;top:${base - 22}px">
              ${b.lw
                ? svg`<text x="0" y="22" textLength=${b.lw} lengthAdjust="spacingAndGlyphs">${b.label}</text>`
                : svg`<text x="0" y="22">${b.label}</text>`}
            </svg>`
          : nothing}
        <div class="board" style="left:${left}px;top:${top}px;width:${b.w}px;height:${b.h}px">
          <svg width=${b.w} height=${b.h} shape-rendering="crispEdges">${b.art()}</svg>
        </div>`;
    });
  }
}

/* ---------- toolbar ---------- */

const H = (x: number, y: number) => svg`<rect x=${x - 2} y=${y - 2} width="4" height="4" fill="#f4f4f4" stroke="#b5b5b7" stroke-width="1.4"></rect>`;
const corners = (x1: number, y1: number, x2: number, y2: number) => [H(x1, y1), H(x2, y1), H(x1, y2), H(x2, y2)];
const teal = "#99ddd2";
const grn = "#b9df7e";
const grnLine = "#9bb87e";

const icons: Record<string, unknown> = {
  Insert: svg`<rect x="-3" y="5" width="38" height="38" rx="7" fill="#fff" stroke="#8b8b8b" stroke-width="2"></rect>
    <path d="M16 12V36M4 24H28" stroke="#3e3e3e" stroke-width="2.500"></path><path d="M42 32.500H54L48 40.500Z" fill="#333"></path>`,
  Group: svg`<rect x="5" y="5" width="39" height="39" fill="none" stroke="#bcbcbe" stroke-width="2"></rect>${corners(5, 5, 44, 44)}
    <rect x="19" y="19" width="19" height="19" fill="#e6e6e6" stroke="#bdbdbf" stroke-width="2"></rect>
    <rect x="11" y="11" width="19" height="19" fill="#97d9ec" stroke="#7fb5cd" stroke-width="2"></rect>`,
  Ungroup: svg`<rect x="19" y="19" width="25" height="25" fill="#e4e4e4" stroke="#c0c0c2" stroke-width="2"></rect>${corners(20, 20, 44, 44)}
    <rect x="5" y="5" width="24" height="24" fill="#97d9ec" stroke="#8fc0d6" stroke-width="2"></rect>${corners(5, 5, 29, 29)}`,
  "Create Symbol": svg`<rect x="6" y="5" width="38" height="38" rx="7" fill="#ebebeb" stroke="#bdbdbd" stroke-width="2"></rect>
    <path d="M22 33C13 30 13 19 21 15M15 14H22V21M28 15C37 18 37 29 29 33M35 34H28V27" fill="none" stroke="#dd9fe9" stroke-width="2.500"></path>`,
  "6%": svg`<path d="M-27 24H-11M61 24H77M69 16V32" stroke="#6f6f71" stroke-width="4"></path>
    <path d="M30 29L43 43" stroke="#3b3b3b" stroke-width="6"></path>
    <circle cx="20" cy="19" r="14" fill="#d5e3f6" stroke="#4a4a4a" stroke-width="3"></circle><path d="M8 20A12 12 0 0 1 32 20Z" fill="#f1f4fa"></path>`,
  Edit: svg`<circle cx="24" cy="24" r="19" fill="none" stroke="#bfbfc1" stroke-width="2"></circle>
    <path d="M37 10A19 19 0 1 1 9 37Z" fill=${grn} stroke=${grnLine} stroke-width="2"></path>${H(36, 9)}${H(23, 23)}${H(8, 38)}`,
  Transform: svg`<rect x="5" y="5" width="38" height="38" fill="#cfe0a3" stroke="#b6c79a" stroke-width="2"></rect>
    <path d="M14 15H34L42 43H6Z" fill="#b5dc7c" stroke=${grnLine} stroke-width="2"></path>${corners(5, 5, 43, 43)}${H(14, 15)}${H(34, 15)}`,
  Rotate: svg`<path d="M20 5C2 9-2 30 10 38L5 43H20V28L15 33C8 26 10 12 20 8Z" fill=${grn} stroke=${grnLine} stroke-width="1.600" transform="translate(2 0)"></path>
    <path d="M28 43C46 39 50 18 38 10L43 5H28V20L33 15C40 22 38 36 28 40Z" fill=${grn} stroke=${grnLine} stroke-width="1.600" transform="translate(-1 0)"></path>`,
  Flatten: svg`<circle cx="30" cy="18" r="13.500" fill=${teal} stroke="#86bdb5" stroke-width="2"></circle><circle cx="17" cy="30" r="13" fill=${teal} stroke="#86bdb5" stroke-width="2"></circle>
    <path d="M41 10C46 18 43 27 34 30C32 41 18 47 8 39Z" fill=${grn} stroke=${grnLine} stroke-width="2"></path>`,
  Mask: svg`<circle cx="28" cy="24" r="19" fill=${grn} stroke=${grnLine} stroke-width="2"></circle>
    <rect x="7" y="11" width="29" height="27" fill="#8ecff0" stroke="#f2f2f2" stroke-width="3"></rect><rect x="9" y="13" width="25" height="23" fill="none" stroke="#7fb5cd"></rect>`,
  Scale: svg`<circle cx="29" cy="20" r="15.500" fill=${grn} stroke=${grnLine} stroke-width="2"></circle><circle cx="23" cy="28" r="12.500" fill="#bfe283" stroke=${grnLine} stroke-width="2"></circle>
    <circle cx="15" cy="35" r="8.500" fill="#b5dc7c" stroke=${grnLine} stroke-width="2"></circle>`,
  Union: svg`<path d="M19 5H44V30H31V43H5V19H19Z" fill=${teal} stroke="#7fbcb2" stroke-width="2"></path>`,
  Subtract: svg`<rect x="5" y="19" width="26" height="24" fill=${teal} stroke="#7fbcb2" stroke-width="2"></rect><rect x="19" y="5" width="25" height="25" fill="#eaeaea" stroke="#bdbdbf" stroke-width="2"></rect>`,
  Intersect: svg`<rect x="19" y="5" width="25" height="25" fill="#eaeaea" stroke="#bdbdbf" stroke-width="2"></rect><rect x="5" y="19" width="26" height="24" fill="#e6e6e6" stroke="#bdbdbf" stroke-width="2"></rect>
    <rect x="19" y="19" width="12" height="11" fill=${teal} stroke="#7fbcb2" stroke-width="2"></rect>`,
  Difference: svg`<path d="M19 5H44V30H31V43H5V19H19Z" fill=${teal} stroke="#7fbcb2" stroke-width="2"></path><rect x="19" y="19" width="12" height="11" fill="#e8e8e8" stroke="#7fbcb2" stroke-width="2"></rect>`,
  "Round To Pixel": svg`<path d="M16 5H36L46 13V34L38 43H16L8 36V12Z" fill="#e2e2e2" stroke="#c2c2c4"></path><path d="M13 11H45V36L38 43H13Z" fill="#b5da7d"></path>
    <path d="M8 11H45M8 18.500H46M8 26H46M8 33.500H46M14 6V43M21.500 5V43M29 5V43M36.500 6V43" stroke="#9fb888" stroke-width="1.400"></path><path d="M13 43H39L46 35V12" fill="none" stroke="#9bb87e" stroke-width="2"></path>`,
  Scissors: svg`<path d="M12 4C9 12 15 22 23 32L26 29C20 20 15 12 12 4ZM37 4C40 12 34 22 26 32L23 29C29 20 34 12 37 4Z" fill="#e7e7e7" stroke="#b7b7b9" stroke-width="1.500" transform="translate(2 0)"></path>
    <circle cx="15" cy="36" r="6" fill="#dfe9cc" stroke="#a6cf75" stroke-width="4"></circle><circle cx="37" cy="36" r="6" fill="#dfe9cc" stroke="#a6cf75" stroke-width="4"></circle>`,
  Forward: svg`<rect x="5" y="21" width="38" height="8" fill="#e8e8e8" stroke="#bdbdbf" stroke-width="2"></rect>
    <path d="M24 2L33 15H27V35H43V43H5V35H21V15H15Z" fill="#97d9ec" stroke="#86bfd6" stroke-width="1.600"></path>`,
  Backward: svg`<path d="M5 5H43V13H27V31H33L24 44L15 31H21V13H5Z" fill="#97d9ec" stroke="#86bfd6" stroke-width="1.600"></path>
    <rect x="5" y="19" width="38" height="8" fill="#e8e8e8" stroke="#bdbdbf" stroke-width="2"></rect>`,
  Link: svg`<path d="M13 38C28 38 18 12 33 10" fill="none" stroke="#e2b48f" stroke-width="5"></path><circle cx="9" cy="37" r="6" fill="#e6e6e6" stroke="#bcbcbe" stroke-width="2.500"></circle>
    <circle cx="9" cy="37" r="2" fill="none" stroke="#bcbcbe"></circle><path d="M33 3L45 11L33 19Z" fill="#ececec" stroke="#bcbcbe" stroke-width="2"></path>`,
  Cloud: svg`<circle cx="9.500" cy="28" r="9.500" fill="#ff9a0a" stroke="#c47613" stroke-width="2"></circle><circle cx="38.500" cy="28" r="9.500" fill="#ea5a08" stroke="#b5560f" stroke-width="2"></circle>
    <path d="M14 37C4 22 14 8 24 8C35 8 44 22 35 37Z" fill="#fdd024" stroke="#c88a16" stroke-width="2"></path><path d="M9 37C18 35 19 26 14 20C7 22 3 29 9 37Z" fill="#ff9a0a"></path><path d="M39 37C30 35 29 26 34 20C41 22 45 29 39 37Z" fill="#f27a0a"></path><path d="M8 37.500H40" stroke="#b5700f" stroke-width="2"></path>`,
  Preview: svg`<path d="M7 5L41 24L7 43Z" fill="#fbc02a" stroke="#b86f12" stroke-width="2"></path><path d="M7 43L41 24L31 23L8 36Z" fill="#e85a0a"></path><path d="M8 8V34L21 24Z" fill="#ff9500"></path>
    <path d="M8 6L31 23L8 42M31 19L39 24L31 29L27 24Z" fill="none" stroke="#b86f12" stroke-width="1.400"></path>`,
  View: svg`<rect x="-3" y="5" width="38" height="38" rx="7" fill="#fff" stroke="#8b8b8b" stroke-width="2"></rect>
    <path d="M3 13H29V36H3ZM3 19.500H29M11 20V36" fill="none" stroke="#3c3c3c" stroke-width="2.400"></path><path d="M42 32.500H54L48 40.500Z" fill="#333"></path>`,
  Export: svg`<rect x="9" y="17" width="31" height="26" rx="2" fill="#fafafa" stroke="#a2a2a4" stroke-width="2"></rect>
    <path d="M24.500 30V3M15 12L24.500 2L34 12" fill="none" stroke="#3c3c3c" stroke-width="3.500"></path>`,
};

/* label, centre of the item, label width, enabled */
const tools: [string, number, number, boolean][] = [
  ["Insert", 46, 55, true],
  ["Group", 196, 59, false],
  ["Ungroup", 284, 82, false],
  ["Create Symbol", 488, 140, false],
  ["6%", 715, 30, true],
  ["Edit", 896, 37, false],
  ["Transform", 985, 96, false],
  ["Rotate", 1081, 62, false],
  ["Flatten", 1163, 64, false],
  ["Mask", 1316, 49, false],
  ["Scale", 1384, 52, false],
  ["Union", 1531, 54, false],
  ["Subtract", 1617, 82, false],
  ["Intersect", 1719, 84, false],
  ["Difference", 1828, 98, false],
  ["Round To Pixel", 1967, 140, false],
  ["Scissors", 2168, 80, false],
  ["Forward", 2265, 76, false],
  ["Backward", 2369, 92, false],
  ["Link", 2530, 38, false],
  ["Cloud", 2600, 55, true],
  ["Preview", 2758, 74, true],
  ["View", 2842, 45, true],
  ["Export", 3069, 62, true],
];

@customElement("main-toolbar")
class MainToolbar extends LitElement {
  static styles = css`
    :host { display: flex; flex-direction: column; box-sizing: border-box; height: 138px; border-top: 2px solid #f4f2f4; border-bottom: 2px solid #acacac;
      border-radius: 10px 10px 0 0; background: linear-gradient(#e9e7e9, #d1cfd1); font-family: Inter, "Liberation Sans", sans-serif; }
    .titlebar { height: 41px; display: grid; grid-template-columns: 1348px auto 1fr; align-items: center; }
    .lights { display: flex; gap: 16px; padding-left: 16px; }
    .light { width: 24px; height: 24px; border-radius: 50%; box-sizing: border-box; border: 1.5px solid; }
    .red { background: #fc5b57; border-color: #df4744; }
    .amber { background: #fdbc2e; border-color: #de9f33; }
    .green { background: #27c840; border-color: #1dad2c; }
    .title { display: flex; align-items: center; gap: 10px; font-size: 26px; color: #3a3a3c; letter-spacing: -0.15px; white-space: pre; }
    .title .icon { margin-right: 1px; }
    .edited { color: #9c9b9d; }
    .tools { display: flex; height: 91px; padding-top: 8px; box-sizing: border-box; }
    .tool { display: flex; flex-direction: column; align-items: center; flex: none; color: #7d7c7e; }
    .tool.on { color: #111; }
    .tool svg { overflow: visible; display: block; flex: none; }
    .tool text { font-size: 21.5px; fill: currentColor; }
  `;
  render() {
    let end = 0;
    return html`
      <div class="titlebar">
        <div class="lights"><i class="light red"></i><i class="light amber"></i><i class="light green"></i></div>
        <div class="title">
          <svg class="icon" width="25" height="32" viewBox="0 0 25 32"><path d="M1 1H17L24 8V31H1Z" fill="#fff" stroke="#b5b5b7" stroke-width="1.500"></path><path d="M17 1V8H24" fill="#eee" stroke="#c5c5c7"></path>
            <path d="M8 12H17L21 17L12.500 26L4 17Z" fill="#fdad10"></path><path d="M4 17H21L12.500 26Z" fill="#f08c00"></path><path d="M8 12H17L16 17H9Z" fill="#fdd548"></path></svg>
          <span>bam-web-0.4.1.sketch</span><span class="edited">— Edited</span>
          <svg width="18" height="10" viewBox="0 0 18 10"><path d="M2 1L9 8L16 1" fill="none" stroke="#a5a4a6" stroke-width="2.500"></path></svg>
        </div>
      </div>
      <div class="tools">
        ${tools.map(([name, c, w, on]) => {
          const gap = c - w / 2 - end;
          end = c + w / 2;
          return html`<div class=${on ? "tool on" : "tool"} style="width:${w}px;margin-left:${gap}px">
            <svg width="48" height="48" viewBox="0 0 48 48">${icons[name]}</svg>
            <svg width=${w} height="26"><text x="0" y="22.500" textLength=${w} lengthAdjust="spacingAndGlyphs">${name}</text></svg>
          </div>`;
        })}
      </div>`;
  }
}

/* ---------- left sidebar ---------- */

const pages = ["UX Notes", "Preview", "1 - Dashboard", "2 - Booking", "3 - Customer", "4 - Quotes", "Styleguide", "Symbols", "Discovery", "Case Study"];

type Layer = { t: string; k: "phone" | "laptop" | "screen" | "symbol"; open?: boolean };
const Q = "4-2-4 Quotes-Expanded-Notifica...";
const layers: Layer[] = [
  { t: "4-2-4 Quotes-Expanded-Notificat...", k: "phone" },
  { t: Q, k: "phone" },
  { t: Q, k: "laptop" },
  { t: Q, k: "screen" },
  { t: Q, k: "screen" },
  { t: Q, k: "screen", open: true },
  ...["Header/Super Global/General/...", "Component/Notification/New-...", "Template/Quotes/List/Expand...", "Template/Quotes/Stats"].map((t) => ({ t, k: "symbol" as const })),
  { t: "4-2-3 Quotes-Expanded-Notifica...", k: "screen", open: true },
  ...[
    "Component/Notifications/Exp...",
    "Template/Quotes/List/Expand...",
    "Header/Super Global/General/...",
    "Component/Card/Comparison",
    "Component/Button/Date/Sele...",
    "Component/Button/Export",
    "Component/Card/Cleaning",
    "Component/Card/Quote-Value",
    "Component/Card/Quote",
    "Component/Card/Drop",
  ].map((t) => ({ t, k: "symbol" as const })),
  { t: "4-2-2 Quotes-Expanded-Dropdo...", k: "screen" },
];

@customElement("side-bar")
class SideBar extends LitElement {
  static styles = css`
    :host { display: flex; flex-direction: column; box-sizing: border-box; border-right: 2px solid #a9a9a9; background: #efefef; overflow: hidden;
      font: 23px/56px Inter, "Liberation Sans", sans-serif; letter-spacing: -0.4px; color: #0b0b0d; }
    .head { display: flex; align-items: center; justify-content: space-between; flex: none; box-sizing: border-box; background: #f4f4f4; padding: 0 12px 0 21px; border-bottom: 2px solid #b4b4b4; line-height: 52px; height: 54px; font-size: 22.5px; font-weight: 500; letter-spacing: -0.8px; }
    .head span { padding-top: 2px; }
    .head.second { border-top: 2px solid #b4b4b4; color: #808082; font-weight: 400; letter-spacing: -0.3px; }
    .pages { height: 552px; overflow: hidden; flex: none; }
    .page { height: 54px; padding-left: 50px; }
    .page:nth-child(odd) { background: #ebebeb; }
    .page.sel { background: #6a9ae5; color: #fff; }
    .layers { flex: 1; min-height: 0; overflow: hidden; }
    .row { display: flex; align-items: center; box-sizing: border-box; height: 54px; white-space: nowrap; }
    .row .name { padding-top: 2px; line-height: 50px; }
    .board { background: #fafafa; border-bottom: 2px solid #cbcbcb; letter-spacing: -0.36px; }
    .board .name { padding-top: 4px; line-height: 48px; }
    .symbol + .board { border-top: 2px solid #cbcbcb; }
    .symbol { padding-left: 86px; gap: 16px; background: #efefef; letter-spacing: -0.58px; }
    .symbol:nth-child(odd) { background: #eaeaea; }
    .arrow { width: 18px; height: 18px; margin-left: 16px; flex: none; }
    .kind { width: 28px; margin: 0 8px 0 18px; display: flex; justify-content: center; flex: none; }
    .first .kind { margin-right: 2px; }
    .filter { flex: none; box-sizing: border-box; height: 60px; border-top: 2px solid #cbcbcb; background: #f2f2f2; padding: 11px 8px; }
    .field { box-sizing: border-box; height: 38px; border: 2px solid #c4c4c4; border-radius: 8px; background: #fff; display: flex; align-items: center; gap: 11px; padding-left: 171px; color: #bcbcbe; line-height: 34px; letter-spacing: 0; }
  `;
  private kind(k: Layer["k"]) {
    if (k === "phone")
      return html`<svg width="16" height="24" viewBox="0 0 16 24"><rect width="16" height="24" fill="#c8c8c8"></rect><rect x="2" y="3" width="12" height="18" fill="#35393c"></rect><path d="M3 5H8V10H3ZM9 12H13V17H9Z" fill="#6d7f85"></path><path d="M9 5H13V9H9Z" fill="#4b6b52"></path><path d="M3 13H7V18H3Z" fill="#7a4d4d"></path></svg>`;
    if (k === "laptop")
      return html`<svg width="28" height="26" viewBox="0 0 28 26"><rect x="2" y="0" width="24" height="18" fill="#050505"></rect><path d="M18 0H26V12Z" fill="#262626"></path><path d="M2 18H26L28 26H0Z" fill="#b9b9bb"></path><path d="M5 19H23V22H5Z" fill="#6a6a6c"></path></svg>`;
    return html`<svg width="28" height="26" viewBox="0 0 28 26"><rect width="28" height="18" fill="#191919"></rect><path d="M14 0H28V12L19 15Z" fill="#3e3e3e"></path><rect y="18" width="28" height="3" fill="#d4d4d6"></rect><rect x="9" y="23" width="10" height="2" fill="#ababad"></rect><rect x="12" y="21" width="4" height="2" fill="#c8c8ca"></rect></svg>`;
  }
  render() {
    return html`
      <div class="head"><span>Pages</span><svg width="26" height="24" viewBox="0 0 26 24"><path d="M1 13H25M13 1V24" stroke="#a2a2a2" stroke-width="3"></path></svg></div>
      <div class="pages">${pages.map((p, i) => html`<div class=${i === 1 ? "page sel" : "page"}>${p}</div>`)}<div class="page"></div></div>
      <div class="head second"><span>Preview</span><svg width="26" height="24" viewBox="0 0 26 24"><rect x="1" y="1.500" width="24" height="21" rx="2" fill="none" stroke="#a5a5a5" stroke-width="2.200"></rect><path d="M1 3H25" stroke="#a5a5a5" stroke-width="4"></path><path d="M7 17L13 10L19 17Z" fill="#a5a5a5"></path></svg></div>
      <div class="layers">
        ${layers.map((l, i) =>
          l.k === "symbol"
            ? html`<div class="row symbol"><svg width="28" height="26" viewBox="0 0 28 26"><path d="M10 24C1 22-1 9 6 4M1 3H11V12M18 2C27 4 29 17 22 22M27 23H17V14" fill="none" stroke="#9540c2" stroke-width="2.200"></path></svg><span class="name">${l.t}</span></div>`
            : html`<div class=${i === 0 ? "row board first" : "row board"}>
                <svg class="arrow" viewBox="0 0 18 18"><path d=${l.open ? "M0 2H18L9 16Z" : "M2 0L17 9L2 18Z"} fill="#8d8d8f"></path></svg>
                <span class="kind">${this.kind(l.k)}</span><span class="name">${l.t}</span>
              </div>`
        )}
      </div>
      <div class="filter"><div class="field"><svg width="22" height="24" viewBox="0 0 22 24"><circle cx="9" cy="10" r="7.500" fill="none" stroke="#7c7c7e" stroke-width="2"></circle><path d="M14.500 16L21 22.500" stroke="#7c7c7e" stroke-width="2.400"></path></svg><span>Filter</span></div></div>`;
  }
}

/* ---------- plugin strip ---------- */

const ink = "#6b6b6b";
const dot = svg`<circle cx="55" cy="63" r="7" fill="#4f93fb"></circle>`;
const stripIcons = [
  svg`<path d="M40 47V23M30 32L40 22L50 32" fill="none" stroke=${ink} stroke-width="4"></path><path d="M22 42V58H48M58 42V54" fill="none" stroke=${ink} stroke-width="4"></path>${dot}`,
  svg`<path d="M28 23H52M26 29H54M26 44V35H55V44" fill="none" stroke=${ink} stroke-width="2"></path><rect x="20" y="48" width="40" height="12" fill=${ink}></rect><circle cx="55" cy="63" r="9" fill="#ebebeb"></circle>${dot}`,
  svg`<rect x="21" y="21" width="38" height="38" fill="none" stroke=${ink} stroke-width="2" stroke-dasharray="2 2"></rect><rect x="27" y="27" width="10" height="10" fill="#b9b9b9" stroke=${ink} stroke-width="2"></rect><path d="M42 29H54M42 35H54M26 45H54M26 51H54" stroke=${ink} stroke-width="2"></path>${dot}`,
  svg`<rect x="20" y="21" width="18" height="18" fill=${ink}></rect><rect x="43" y="22" width="16" height="16" fill="none" stroke=${ink} stroke-width="2" stroke-dasharray="4 2"></rect><rect x="21" y="44" width="16" height="16" fill="none" stroke=${ink} stroke-width="2" stroke-dasharray="4 2"></rect>`,
  svg`<path d="M23 40V23H57V54M40 58H48" fill="none" stroke=${ink} stroke-width="2"></path><rect x="20" y="20" width="6" height="6" fill=${ink}></rect><rect x="54" y="20" width="6" height="6" fill=${ink}></rect>
    <path d="M22 58V48L40 30L50 40L32 58Z" fill="#ebebeb" stroke=${ink} stroke-width="2"></path><path d="M36 34L42 28L52 38L46 44Z" fill=${ink}></path>${dot}`,
  svg`<path d="M41 27H21V59H53V42" fill="none" stroke=${ink} stroke-width="2.400"></path><path d="M52 20V38M44 28H60" stroke=${ink} stroke-width="4"></path><path d="M26 50L31 43L34 47L41 38L49 50Z" fill=${ink}></path>`,
  svg`<path d="M40 20L58 30V50L40 60L22 50V30Z" fill=${ink}></path><circle cx="40" cy="40" r="7.500" fill="#ebebeb"></circle>`,
];

@customElement("plugin-strip")
class PluginStrip extends LitElement {
  static styles = css`
    :host { display: flex; flex-direction: column; box-sizing: border-box; border: solid #a9a9a9; border-width: 0 2px; background: #ebebeb; }
    .cell { height: 78px; border-bottom: 2px solid #b3b3b3; flex: none; }
    .tab { height: 52px; background: #cccccc; }
    .grow { flex: 1; border-bottom: 2px solid #b3b3b3; }
    .last { height: 76px; }
    svg { display: block; }
  `;
  render() {
    return html`
      <div class="cell tab"><svg width="80" height="52"><path d="M39 11V40A14 14.500 0 0 1 39 11Z" fill="#a5a5a5"></path><path d="M42 11H54V23C48 23 42 18 42 11ZM54 28V40H42C42 33 48 28 54 28Z" fill="#a5a5a5"></path></svg></div>
      ${stripIcons.map((s) => html`<div class="cell"><svg width="80" height="78">${s}</svg></div>`)}
      <div class="grow"></div>
      <div class="last"><svg width="80" height="76"><path d="M46 20L28 42H38L34 59L53 35H43Z" fill=${ink}></path></svg></div>`;
  }
}

/* ---------- inspector ---------- */

const L = "#c0c0c0";
const B = "#9fcff7";

@customElement("inspector-panel")
class InspectorPanel extends LitElement {
  static styles = css`
    :host { display: flex; flex-direction: column; background: #ebebeb; font: 23px/30px Inter, "Liberation Sans", sans-serif; color: #0d0d0f; letter-spacing: -0.1px; }
    .align { height: 52px; flex: none; background: #f5f5f5; border-bottom: 2px solid #a9a9a9; }
    .align svg { display: block; }
    .grid { display: grid; grid-template-columns: 126px 118px 150px; grid-auto-rows: 70px; padding: 16px 0 0 14px; height: 230px; box-sizing: border-box; }
    .grid > .cell + .cell { margin-left: 32px; }
    .name { padding-top: 6px; }
    .cell { display: flex; flex-direction: column; align-items: center; font-size: 20px; line-height: 28px; letter-spacing: 0; }
    .input { width: 118px; height: 38px; box-sizing: border-box; background: #fff; border: 2px solid #d2d2d2; }
    .flip { width: 118px; height: 37px; box-sizing: border-box; background: #f5f5f5; border: 2px solid #d2d2d2; border-radius: 8px; display: flex; margin-bottom: 1px; }
    .section { display: flex; align-items: center; height: 50px; border-top: 2px solid #cecece; padding: 0 16px 0 14px; font-weight: 600; color: #505052; letter-spacing: 0.05px; }
    .section svg { margin-left: 12px; }
    .check { margin-left: auto; width: 24px; height: 24px; box-sizing: border-box; border: 2px solid #c6c6c6; border-radius: 6px; background: #f7f7f7; }
    .end { border-top: 2px solid #cecece; }
  `;
  render() {
    return html`
      <div class="align"><svg width="426" height="52">
        <g stroke=${L} stroke-width="2" fill="none">
          <path d="M15 14V42M39 14V42M66 17H94M66 41H94"></path><path d="M113 0V52" stroke="#d0d0d0"></path>
          <path d="M133 14V42M195 14V42M259 14V42M282 15H310M332 29H360M382 41H410"></path>
        </g>
        <g fill=${B}>
          <rect x="24" y="18" width="6" height="20" rx="1"></rect><rect x="70" y="26" width="20" height="6" rx="1"></rect>
          <rect x="136" y="18" width="20" height="6" rx="1"></rect><rect x="136" y="32" width="12" height="6" rx="1"></rect>
          <rect x="182" y="18" width="26" height="6" rx="1"></rect><rect x="186" y="32" width="18" height="6" rx="1"></rect>
          <rect x="236" y="18" width="20" height="6" rx="1"></rect><rect x="244" y="32" width="12" height="6" rx="1"></rect>
          <rect x="286" y="18" width="6" height="20" rx="1"></rect><rect x="300" y="18" width="6" height="12" rx="1"></rect>
          <rect x="336" y="16" width="6" height="26" rx="1"></rect><rect x="350" y="22" width="6" height="14" rx="1"></rect>
          <rect x="386" y="18" width="6" height="20" rx="1"></rect><rect x="400" y="26" width="6" height="12" rx="1"></rect>
        </g></svg></div>
      <div class="grid">
        <div class="name">Position</div><div class="cell"><div class="input"></div>X</div><div class="cell"><div class="input"></div>Y</div>
        <div class="name">Size</div><div class="cell"><div class="input"></div>Width</div><div class="cell"><div class="input"></div>Height</div>
        <div class="name">Transform</div><div class="cell"><div class="input"></div>Rotate</div>
        <div class="cell"><div class="flip"><svg width="114" height="33"><path d="M57 0V33" stroke="#dedede" stroke-width="2"></path>
          <path d="M14 24L24 5V24Z" fill="#cacaca"></path><path d="M40 24L30 5V24Z" fill="#a2a2a2"></path><path d="M27 3V28" stroke="#b5b5b5" stroke-width="2"></path>
          <path d="M78 3L96 12H78Z" fill="#cacaca"></path><path d="M78 28L96 19H78Z" fill="#a2a2a2"></path><path d="M74 15.500H100" stroke="#b5b5b5" stroke-width="2"></path></svg></div>Flip</div>
      </div>
      <div>
        ${["Fills", "Borders", "Shadows", "Inner Shadows"].map((s) => html`<div class="section">${s}</div>`)}
        <div class="section">Gaussian Blur<svg width="14" height="20" viewBox="0 0 14 20"><path d="M1 7L7 1.500L13 7M1 13L7 18.500L13 13" fill="none" stroke="#9b9b9b" stroke-width="2.400"></path></svg><div class="check"></div></div>
        <div class="end"></div>
      </div>`;
  }
}

@customElement("app-root")
class AppRoot extends LitElement {
  static styles = css`
    :host { display: flex; flex-direction: column; width: 3118px; height: 2022px; overflow: hidden; background: #fff; }
    main-toolbar { flex: none; }
    .body { flex: 1; min-height: 0; display: grid; grid-template-columns: 484px 2124px 84px 426px; grid-template-rows: 100%; }
  `;
  render() {
    return html`<main-toolbar></main-toolbar>
      <div class="body"><side-bar></side-bar><art-canvas></art-canvas><plugin-strip></plugin-strip><inspector-panel></inspector-panel></div>`;
  }
}
